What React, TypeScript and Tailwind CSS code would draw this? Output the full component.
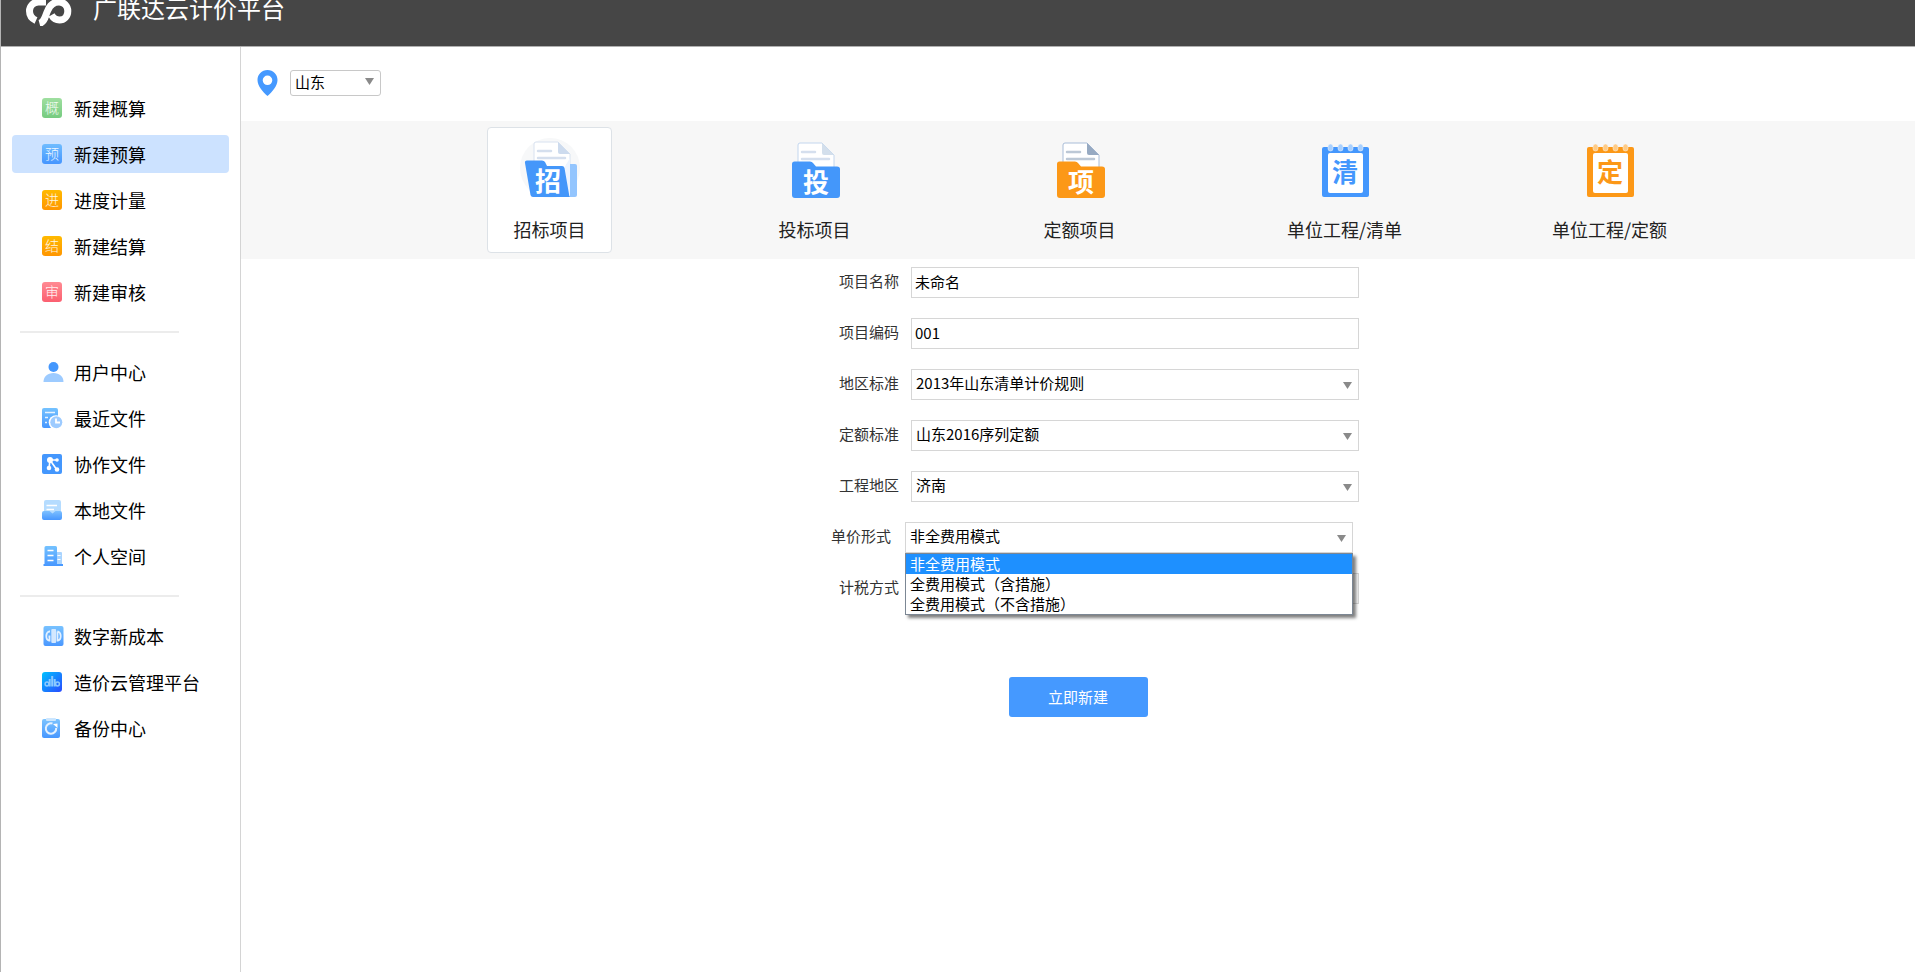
import type { ReactNode } from "react";

interface NavItem {
  label: string;
  icon: ReactNode;
  active?: boolean;
}

interface ProjectType {
  label: string;
  icon: ReactNode;
}

function Tile({ char, color }: { char: string; color: string }) {
  return (
    <span
      aria-hidden="true"
      className={`flex h-5 w-5 items-center justify-center rounded-[3px] bg-linear-to-b pb-0.5 text-sm leading-none font-light text-white/90 ${color}`}
    >
      {char}
    </span>
  );
}

function Logo() {
  return (
    <svg className="h-9 w-[46px] shrink-0" viewBox="0 0 46 36" fill="none" stroke="#fff" strokeWidth="7">
      <path d="M10 30.500C5.500 28.500 3.500 25.500 3.500 21C3.500 16 7.500 12 12.500 12H20" />
      <path d="M13.500 33.500C19 32 19 26 22 20C24.500 14.500 27.500 12 33 12C38 12 41.800 16 41.800 21C41.800 26.500 38 30 33.500 30C29.500 30 27.500 28.500 25.500 25" />
    </svg>
  );
}

function UserIcon() {
  return (
    <svg className="h-5 w-5 overflow-visible" viewBox="0 0 20 20">
      <circle cx="11.500" cy="5" r="5" fill="#4497fd" />
      <path d="M1.500 20C1.500 14.500 5.500 11 11.500 11C17.500 11 21.500 14.500 21.500 20Z" fill="#9dcbff" />
    </svg>
  );
}

function RecentIcon() {
  return (
    <svg className="h-5 w-5 overflow-visible" viewBox="0 0 20 20">
      <defs>
        <linearGradient id="recent" x1="0" y1="0" x2="0" y2="1">
          <stop offset="0" stopColor="#74c2ff" />
          <stop offset="1" stopColor="#4797ff" />
        </linearGradient>
      </defs>
      <rect width="16" height="20" rx="2" fill="url(#recent)" />
      <path d="M3 4.500H13M3 9.500H6M3 14.500H5" stroke="#e6f3ff" strokeWidth="1.600" />
      <circle cx="14" cy="14.500" r="7.300" fill="#fff" />
      <circle cx="14.300" cy="14.300" r="6" fill="#9dcbff" />
      <path d="M14 10.500V14.500H18" fill="none" stroke="#fff" strokeWidth="1.800" />
    </svg>
  );
}

function CollabIcon() {
  return (
    <svg className="h-5 w-5" viewBox="0 0 20 20">
      <rect width="20" height="20" rx="2" fill="#4497fd" />
      <path d="M8 6H15M8 6L15 16M8 6L7 14" stroke="#fff" strokeWidth="1.600" />
      <g fill="#fff">
        <circle cx="8" cy="6" r="3" />
        <circle cx="15" cy="6" r="1.800" />
        <circle cx="7" cy="14" r="2.300" />
        <circle cx="15" cy="15.500" r="2.300" />
      </g>
    </svg>
  );
}

function LocalIcon() {
  return (
    <svg className="h-5 w-5" viewBox="0 0 20 20">
      <defs>
        <linearGradient id="local" x1="0" y1="0" x2="0" y2="1">
          <stop offset="0" stopColor="#7dc0ff" />
          <stop offset="1" stopColor="#4797ff" />
        </linearGradient>
      </defs>
      <rect x="2" width="17" height="15" rx="2" fill="#b5dcff" />
      <path d="M4.500 5.500H15M4.500 9.500H12" stroke="#fff" strokeWidth="1.500" />
      <path d="M0 13Q0 11 2 11H7.500L10.500 13.500L13.500 11H18Q20 11 20 13V18Q20 20 18 20H2Q0 20 0 18Z" fill="url(#local)" />
    </svg>
  );
}

function SpaceIcon() {
  return (
    <svg className="h-5 w-5 overflow-visible" viewBox="0 0 20 20">
      <defs>
        <linearGradient id="space" x1="0" y1="0" x2="0" y2="1">
          <stop offset="0" stopColor="#74c2ff" />
          <stop offset="1" stopColor="#4797ff" />
        </linearGradient>
      </defs>
      <rect x="14" y="6" width="6" height="13" rx="1" fill="#a9d4ff" />
      <path d="M2.500 1.500Q2.500 0 4 0H13.500Q15 0 15 1.500V18H21V20H1.500V18H2.500Z" fill="url(#space)" />
      <path d="M5.500 4.500H11.500M5.500 9.500H11.500M5.500 14.500H11.500" stroke="#fff" strokeWidth="1.600" />
      <path d="M15.500 9.500H18.500M15.500 13.500H18.500" stroke="#fff" strokeWidth="1.200" />
    </svg>
  );
}

function DigitalIcon() {
  return (
    <svg className="h-5 w-5 overflow-visible" viewBox="0 0 20 20">
      <defs>
        <linearGradient id="digital" x1="0" y1="0" x2="0" y2="1">
          <stop offset="0" stopColor="#78c2ff" />
          <stop offset="1" stopColor="#4a98ff" />
        </linearGradient>
      </defs>
      <rect x="1.500" width="20" height="20" rx="2" fill="url(#digital)" />
      <g fill="none" stroke="#e3f1ff" strokeWidth="1.800">
        <path d="M8 5.500H7Q4.300 6.500 4.300 10Q4.300 14 7 14.500H7.500V10.500H6.500" />
        <path d="M15.500 5.500V14.500H16Q18.700 14 18.700 10Q18.700 6.500 16 5.500H15.500" />
      </g>
      <rect x="9.300" y="3" width="4.800" height="14" rx="1" fill="#d3e8ff" />
    </svg>
  );
}

function CloudIcon() {
  return (
    <svg className="h-5 w-5" viewBox="0 0 20 20">
      <defs>
        <linearGradient id="cloud" x1="0" y1="0" x2="1" y2="1">
          <stop offset="0" stopColor="#00c2ff" />
          <stop offset="1" stopColor="#2a49ff" />
        </linearGradient>
      </defs>
      <rect width="20" height="20" rx="3" fill="url(#cloud)" />
      <g fill="none" stroke="#8ccaff" strokeWidth="1.500">
        <circle cx="5" cy="12" r="1.900" />
        <circle cx="15.500" cy="12" r="1.900" />
        <path d="M7.700 7V14.500M10.200 4V14.500M12.700 7V14.500" strokeWidth="2" />
      </g>
    </svg>
  );
}

function BackupIcon() {
  return (
    <svg className="h-5 w-5" viewBox="0 0 20 20">
      <defs>
        <linearGradient id="backup" x1="0" y1="0" x2="0" y2="1">
          <stop offset="0" stopColor="#7cc4ff" />
          <stop offset="1" stopColor="#4797ff" />
        </linearGradient>
      </defs>
      <rect y="1" width="18" height="19" rx="2" fill="url(#backup)" />
      <rect x="4" width="10" height="3" rx="1" fill="#cbe6ff" />
      <path d="M10.500 5.500A5.200 5.200 0 1 0 14.200 10" fill="none" stroke="#e3f1ff" strokeWidth="2" />
      <path d="M11 6L15.500 5.500V10Z" fill="#fff" />
    </svg>
  );
}

function Paper({ fold, line, edge }: { fold: string; line: string; edge: string }) {
  return (
    <g>
      <path d="M17 6Q17 4 19 4H41L53 16V36H17Z" fill="#fff" stroke={edge} strokeWidth="1" />
      <path d="M41 4L53 16H43Q41 16 41 14Z" fill={fold} />
      <path d="M21 13H34M21 20H48" stroke={line} strokeWidth="2.500" strokeLinecap="round" />
    </g>
  );
}

const glyph = "text-[26px] font-bold";

function OpenFolderIcon() {
  return (
    <svg className="h-[60px] w-[60px] overflow-visible" viewBox="0 0 60 60">
      <circle cx="30" cy="30" r="30" fill="#f7f8f9" />
      <g transform="translate(-3 0)">
        <Paper fold="#cddbee" line="#d5dfee" edge="#d8e2f0" />
      </g>
      <rect x="46" y="26" width="11" height="33" rx="2" fill="#93c5fe" />
      <path d="M50 20V58H44V30Z" fill="#eef5ff" />
      <path d="M5 25Q4.500 22.500 7 22.500H22Q24 22.500 25 24L27 28H42Q44 28 44.500 30L49.500 59H13Q11 59 10.500 57Z" fill="#4497fa" />
      <text x="28" y="53" textAnchor="middle" className={glyph} fill="#fff">招</text>
    </svg>
  );
}

function FolderIcon({ char, color, dark }: { char: string; color: string; dark?: boolean }) {
  return (
    <svg className="h-[60px] w-[60px] overflow-visible" viewBox="0 0 60 60">
      <g transform="translate(-4 1)">
        {dark ? (
          <Paper fold="#97aac2" line="#bcc8d6" edge="#a9bdd8" />
        ) : (
          <Paper fold="#d3dfec" line="#d5dfee" edge="#c3d6ee" />
        )}
      </g>
      <path
        d="M7 26Q7 23.500 9.500 23.500H25Q27 23.500 28 25L31 28.500H52Q55 28.500 55 31V57Q55 60 52 60H10Q7 60 7 57Z"
        fill={color}
      />
      <text x="31" y="54" textAnchor="middle" className={glyph} fill="#fff">{char}</text>
    </svg>
  );
}

function NotepadIcon({ char, color, ring }: { char: string; color: string; ring: string }) {
  return (
    <svg className="h-[60px] w-[60px] overflow-visible" viewBox="0 0 60 60">
      <rect x="7" y="9" width="47" height="50" rx="2" fill={color} />
      <rect x="13" y="15" width="35" height="40" rx="2" fill="#fff" />
      <g fill={ring} stroke="#f7f7f7" strokeWidth="0.500">
        {[15, 25, 35, 45].map((x) => (
          <rect key={x} x={x - 2} y="6" width="5" height="7" rx="2.500" />
        ))}
      </g>
      <text x="30" y="44" textAnchor="middle" className="text-[26px] font-bold" fill={color}>{char}</text>
    </svg>
  );
}

function Arrow({ className }: { className: string }) {
  return (
    <svg className={`pointer-events-none absolute h-[7px] w-[9px] ${className}`} viewBox="0 0 9 7">
      <path d="M0 0H9L4.500 7Z" fill="#8a8a8a" />
    </svg>
  );
}

const navGroups: NavItem[][] = [
  [
    { label: "新建概算", icon: <Tile char="概" color="from-[#9fdfa0] to-[#76cb80]" /> },
    { label: "新建预算", icon: <Tile char="预" color="from-[#6fbcff] to-[#4595ff]" />, active: true },
    { label: "进度计量", icon: <Tile char="进" color="from-[#ffba00] to-[#ff9500]" /> },
    { label: "新建结算", icon: <Tile char="结" color="from-[#ffba00] to-[#ff9500]" /> },
    { label: "新建审核", icon: <Tile char="审" color="from-[#ff8a93] to-[#fb5f70]" /> },
  ],
  [
    { label: "用户中心", icon: <UserIcon /> },
    { label: "最近文件", icon: <RecentIcon /> },
    { label: "协作文件", icon: <CollabIcon /> },
    { label: "本地文件", icon: <LocalIcon /> },
    { label: "个人空间", icon: <SpaceIcon /> },
  ],
  [
    { label: "数字新成本", icon: <DigitalIcon /> },
    { label: "造价云管理平台", icon: <CloudIcon /> },
    { label: "备份中心", icon: <BackupIcon /> },
  ],
];

const projectTypes: ProjectType[] = [
  { label: "招标项目", icon: <OpenFolderIcon /> },
  { label: "投标项目", icon: <FolderIcon char="投" color="#4497fa" /> },
  { label: "定额项目", icon: <FolderIcon char="项" color="#fc9817" dark /> },
  { label: "单位工程/清单", icon: <NotepadIcon char="清" color="#4497fd" ring="#a8d0ff" /> },
  { label: "单位工程/定额", icon: <NotepadIcon char="定" color="#fc9817" ring="#ffcb85" /> },
];

const priceModes = ["非全费用模式", "全费用模式（含措施）", "全费用模式（不含措施）"];

const fieldClass =
  "block h-[31px] w-full border border-[#d6d6d6] bg-white pb-0.5 text-[15px] text-black outline-none";

function Field({
  id,
  label,
  shifted,
  children,
}: {
  id: string;
  label: string;
  shifted?: boolean;
  children: ReactNode;
}) {
  return (
    <div className={`flex items-center ${shifted ? "mr-1.5 -ml-2 gap-3.5" : "gap-3"}`}>
      <label htmlFor={id} className="w-[102px] shrink-0 pb-0.5 text-right text-[15px] text-[#333]">
        {label}
      </label>
      <div className="relative flex-1">{children}</div>
    </div>
  );
}

function SelectField({ id, label, value }: { id: string; label: string; value: string }) {
  return (
    <Field id={id} label={label}>
      <select id={id} className={`${fieldClass} appearance-none pl-1`}>
        <option>{value}</option>
      </select>
      <Arrow className="top-[13px] right-[7px]" />
    </Field>
  );
}

export default function App() {
  return (
    <div className="flex min-h-screen flex-col border-l border-[#b4b4b4] bg-white font-['Noto_Sans_CJK_SC',sans-serif]">
      <header className="h-[47px] overflow-hidden border-b border-[#b0b0b0] bg-[#464646]">
        <div className="-mt-3 flex items-center gap-[21px] pl-[25px]">
          <Logo />
          <h1 className="text-2xl leading-10 text-white">广联达云计价平台</h1>
        </div>
      </header>

      <div className="flex flex-1">
        <nav className="w-60 shrink-0 border-r border-[#d4d4d4] pt-[42px]">
          {navGroups.map((group, i) => (
            <div key={i}>
              {i > 0 && <hr className="my-5 mr-[61px] ml-[19px] border-t-2 border-[#ececec]" />}
              <ul className="mx-[11px] flex flex-col gap-2">
                {group.map((item) => (
                  <li key={item.label}>
                    <a
                      href="#"
                      className={`flex h-[38px] items-center gap-3 rounded pl-[30px] text-lg text-black ${
                        item.active ? "bg-[#cce2ff]" : ""
                      }`}
                    >
                      {item.icon}
                      {item.label}
                    </a>
                  </li>
                ))}
              </ul>
            </div>
          ))}
        </nav>

        <main className="min-w-0 flex-1">
          <div className="flex items-center gap-3 pt-[23px] pb-[25px] pl-4">
            <svg className="h-[26px] w-[21px]" viewBox="0 0 21 26">
              <path
                d="M10.500 0C4.700 0 0.500 4.500 0.500 10C0.500 16 6 22 10.500 26C15 22 20.500 16 20.500 10C20.500 4.500 16.300 0 10.500 0ZM10.500 5.500A4.800 4.800 0 1 1 10.500 15.100A4.800 4.800 0 1 1 10.500 5.500Z"
                fill="#4599ff"
              />
            </svg>
            <div className="relative">
              <select
                aria-label="地区"
                className="block h-[26px] w-[91px] appearance-none rounded-[3px] border border-[#c8c8c8] bg-white pb-0.5 pl-1 text-[15px] text-black outline-none"
              >
                <option>山东</option>
              </select>
              <Arrow className="top-2 right-[7px]" />
            </div>
          </div>

          <div className="flex justify-center gap-[140px] bg-[#f7f7f7] py-1.5 pl-[3px]">
            {projectTypes.map((type, i) => (
              <button
                key={type.label}
                type="button"
                className={`flex h-[126px] w-[125px] flex-col items-center gap-[17px] rounded border pt-2.5 text-lg leading-7 whitespace-nowrap text-[#222] ${
                  i === 0 ? "border-[#dde2e7] bg-white" : "border-transparent"
                }`}
              >
                {type.icon}
                {type.label}
              </button>
            ))}
          </div>

          <form className="mx-auto flex w-[562px] flex-col gap-5 pt-2" onSubmit={(e) => e.preventDefault()}>
            <Field id="name" label="项目名称">
              <input id="name" className={`${fieldClass} px-[3px]`} defaultValue="未命名" />
            </Field>
            <Field id="code" label="项目编码">
              <input id="code" className={`${fieldClass} px-[3px]`} defaultValue="001" />
            </Field>
            <SelectField id="region" label="地区标准" value="2013年山东清单计价规则" />
            <SelectField id="quota" label="定额标准" value="山东2016序列定额" />
            <SelectField id="area" label="工程地区" value="济南" />
            <Field id="price" label="单价形式" shifted>
              <select id="price" className={`${fieldClass} appearance-none pl-1`}>
                {priceModes.map((mode) => (
                  <option key={mode}>{mode}</option>
                ))}
              </select>
              <Arrow className="top-[13px] right-[7px]" />
              <ul
                role="listbox"
                aria-label="单价形式"
                className="absolute inset-x-0 top-[31px] z-10 border border-[#7c8794] bg-white text-[15px] leading-5 text-black shadow-[3px_3px_3px_rgba(0,0,0,0.5)]"
              >
                {priceModes.map((mode, i) => (
                  <li
                    key={mode}
                    role="option"
                    aria-selected={i === 0}
                    className={`pl-1 ${i === 0 ? "bg-[#1e90ff] text-white" : ""}`}
                  >
                    {mode}
                  </li>
                ))}
              </ul>
            </Field>
            <Field id="tax" label="计税方式">
              <select id="tax" disabled className="block h-[31px] w-full appearance-none border border-[#d6d6d6] bg-[#f7f7f7]" />
            </Field>
            <button
              type="submit"
              className="mx-auto mt-[53px] h-10 w-[139px] rounded-[3px] bg-[#4599ff] text-[15px] text-white"
            >
              立即新建
            </button>
          </form>
        </main>
      </div>
    </div>
  );
}
